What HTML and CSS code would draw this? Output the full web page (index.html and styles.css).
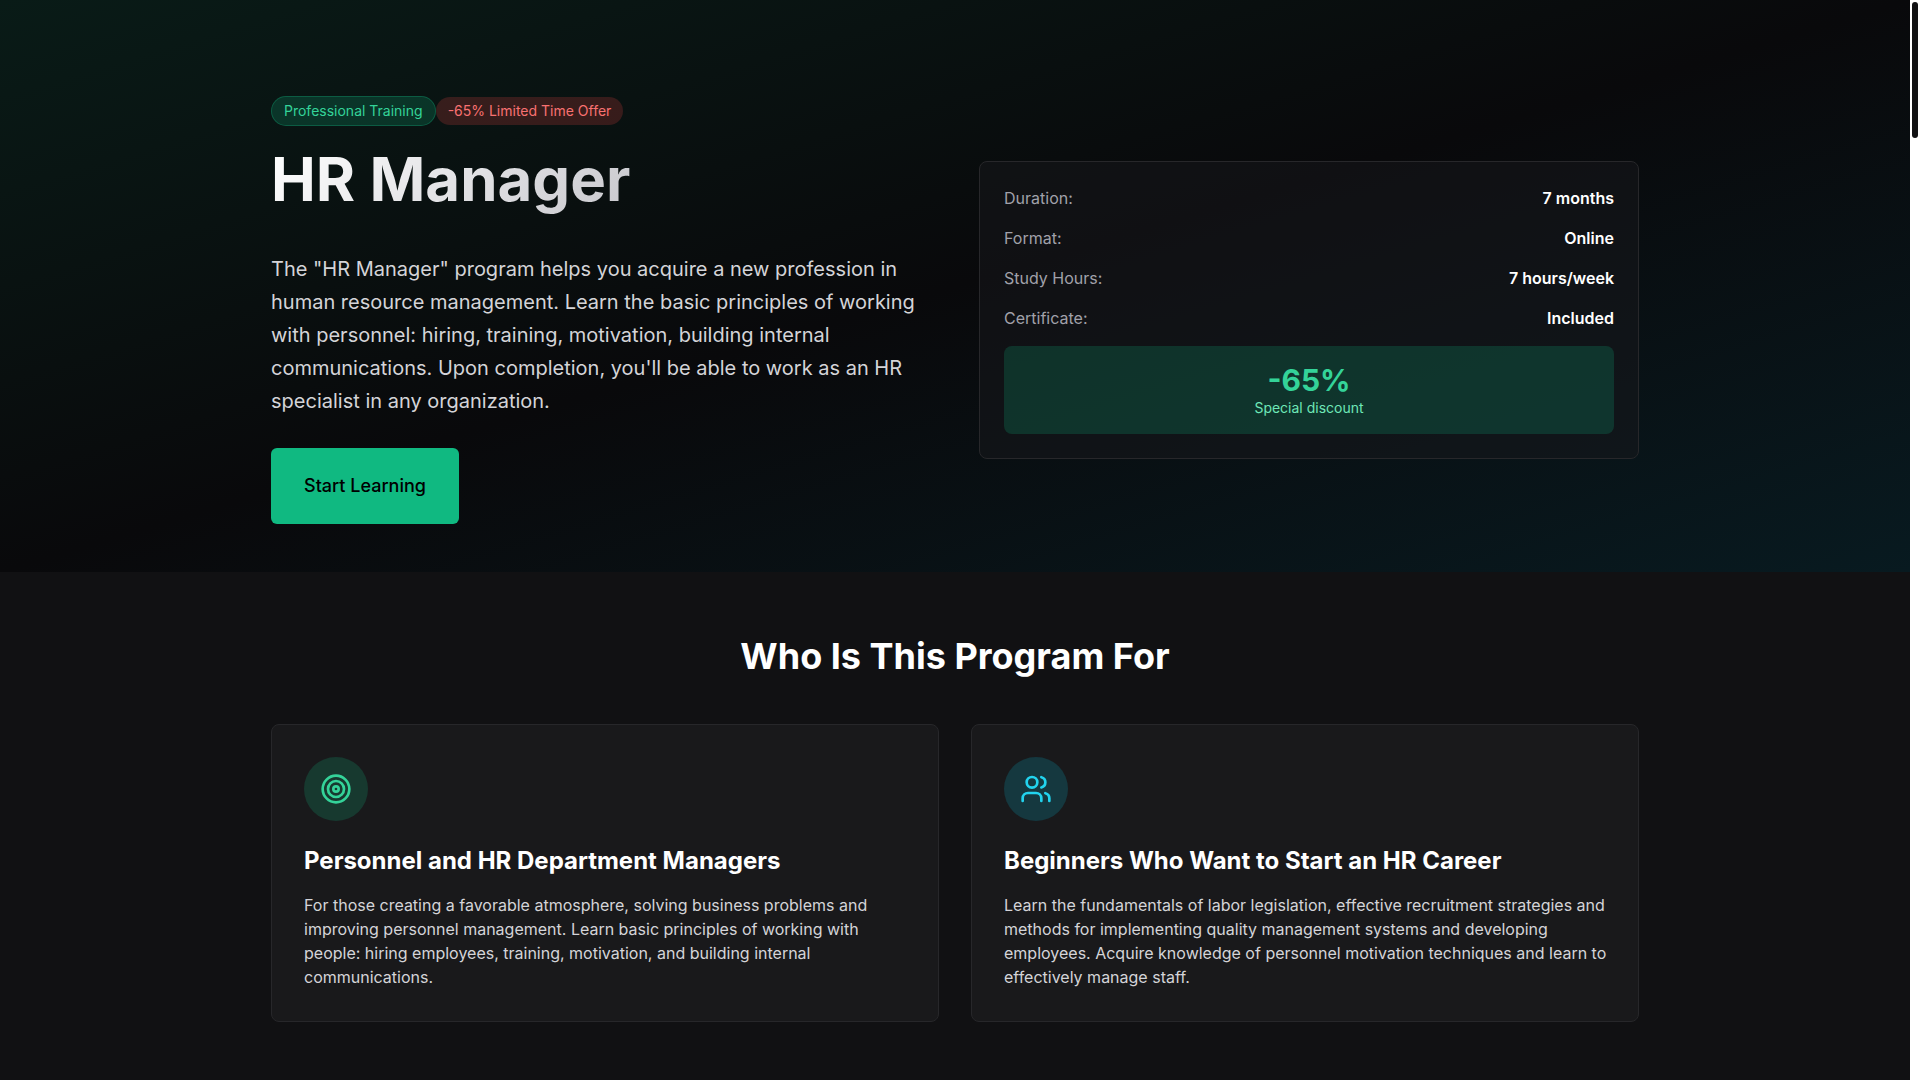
FILE: index.html
```html
<!DOCTYPE html>
<html lang="en">
<head>
  <meta charset="UTF-8">
  <meta name="viewport" content="width=device-width, initial-scale=1.0">
  <title>HR Manager</title>
  <link rel="stylesheet" href="styles.css">
</head>
<body>
  <main class="page">

    <!-- Hero -->
    <section class="hero">
      <div class="container hero-grid">
        <div class="hero-text">
          <div class="badges">
            <span class="badge badge-green">Professional Training</span>
            <span class="badge badge-red">-65% Limited Time Offer</span>
          </div>
          <h1>HR Manager</h1>
          <p class="lead">The "HR Manager" program helps you acquire a new profession in human resource management. Learn the basic principles of working with personnel: hiring, training, motivation, building internal communications. Upon completion, you'll be able to work as an HR specialist in any organization.</p>
          <button type="button" class="start-btn">Start Learning</button>
        </div>

        <div class="info-card">
          <dl class="info-list">
            <div class="info-row"><dt>Duration:</dt><dd>7 months</dd></div>
            <div class="info-row"><dt>Format:</dt><dd>Online</dd></div>
            <div class="info-row"><dt>Study Hours:</dt><dd>7 hours/week</dd></div>
            <div class="info-row"><dt>Certificate:</dt><dd>Included</dd></div>
          </dl>
          <div class="discount">
            <div class="discount-value">-65%</div>
            <div class="discount-label">Special discount</div>
          </div>
        </div>
      </div>
    </section>

    <!-- Audience -->
    <section class="audience">
      <div class="container">
        <h2>Who Is This Program For</h2>
        <div class="audience-grid">
          <article class="audience-card">
            <div class="icon icon-green">
              <svg viewBox="0 0 24 24" aria-hidden="true">
                <circle cx="12" cy="12" r="10"/>
                <circle cx="12" cy="12" r="6"/>
                <circle cx="12" cy="12" r="2"/>
              </svg>
            </div>
            <h3>Personnel and HR Department Managers</h3>
            <p>For those creating a favorable atmosphere, solving business problems and improving personnel management. Learn basic principles of working with people: hiring employees, training, motivation, and building internal communications.</p>
          </article>

          <article class="audience-card">
            <div class="icon icon-cyan">
              <svg viewBox="0 0 24 24" aria-hidden="true">
                <path d="M16 21v-2a4 4 0 0 0-4-4H6a4 4 0 0 0-4 4v2"/>
                <circle cx="9" cy="7" r="4"/>
                <path d="M22 21v-2a4 4 0 0 0-3-3.87"/>
                <path d="M16 3.13a4 4 0 0 1 0 7.75"/>
              </svg>
            </div>
            <h3>Beginners Who Want to Start an HR Career</h3>
            <p>Learn the fundamentals of labor legislation, effective recruitment strategies and methods for implementing quality management systems and developing employees. Acquire knowledge of personnel motivation techniques and learn to effectively manage staff.</p>
          </article>
        </div>
      </div>
    </section>

  </main>
  <div class="scrollbar"><div class="scrollbar-thumb"></div></div>
</body>
</html>
```

FILE: styles.css
```css
* {
  box-sizing: border-box;
  margin: 0;
  padding: 0;
}

body {
  background: #111113;
  color: #fafafa;
  font-family: Inter, sans-serif;
  font-size: 16px;
  line-height: 24px;
  padding-right: 10px;
}

.container {
  max-width: 1400px;
  margin: 0 auto;
  padding: 0 16px;
}

/* Hero */
.hero {
  background: linear-gradient(to bottom right, #091b17, #09090b 50%, #081a20);
  padding: 96px 0 48px;
}

.hero-grid {
  display: grid;
  grid-template-columns: 1fr 1fr;
  gap: 48px;
  align-items: center;
}

.badges {
  display: flex;
  align-items: center;
  margin-bottom: 16px;
}

.badge {
  font-size: 14px;
  line-height: 20px;
  padding: 4px 12px;
  border-radius: 20px;
}

.badge-green {
  background: rgba(16, 185, 129, 0.2);
  border: 1px solid rgba(16, 185, 129, 0.3);
  color: #34d399;
}

.badge-red {
  background: rgba(239, 68, 68, 0.2);
  color: #f87171;
}

h1 {
  font-size: 60px;
  line-height: 75px;
  font-weight: 700;
  margin-bottom: 36px;
  background: linear-gradient(135deg, #fff, #a1a1aa);
  -webkit-background-clip: text;
  background-clip: text;
  color: transparent;
}

.lead {
  font-size: 20px;
  line-height: 33px;
  color: #d4d4d8;
  margin-bottom: 30px;
}

.start-btn {
  display: block;
  min-width: 188px;
  background: #10b981;
  color: #000;
  border: none;
  border-radius: 6px;
  font-family: inherit;
  font-size: 18px;
  line-height: 28px;
  font-weight: 500;
  padding: 24px 32px;
  cursor: pointer;
}

.info-card {
  background: rgba(24, 24, 27, 0.5);
  border: 1px solid #27272a;
  border-radius: 8px;
  padding: 24px;
}

.info-list {
  display: grid;
  gap: 16px;
  margin-bottom: 16px;
}

.info-row {
  display: flex;
  justify-content: space-between;
}

.info-row dt {
  color: #a1a1aa;
}

.info-row dd {
  color: #fff;
  font-weight: 600;
}

.discount {
  background: rgba(16, 185, 129, 0.2);
  border-radius: 8px;
  padding: 16px;
  text-align: center;
}

.discount-value {
  color: #34d399;
  font-size: 30px;
  line-height: 36px;
  font-weight: 700;
}

.discount-label {
  color: #6ee7b7;
  font-size: 14px;
  line-height: 20px;
}

/* Audience */
.audience {
  padding: 64px 0;
}

h2 {
  color: #fff;
  font-size: 36px;
  line-height: 40px;
  font-weight: 700;
  text-align: center;
  margin-bottom: 48px;
}

.audience-grid {
  display: grid;
  grid-template-columns: 1fr 1fr;
  gap: 32px;
}

.audience-card {
  background: #19191b;
  border: 1px solid #27272a;
  border-radius: 8px;
  padding: 32px 28px 32px 32px;
}

.icon {
  width: 64px;
  height: 64px;
  border-radius: 50%;
  display: flex;
  align-items: center;
  justify-content: center;
  margin-bottom: 24px;
}

.icon svg {
  width: 32px;
  height: 32px;
  fill: none;
  stroke: currentColor;
  stroke-width: 2;
  stroke-linecap: round;
  stroke-linejoin: round;
}

.icon-green {
  background: rgba(16, 185, 129, 0.2);
  color: #34d399;
}

.icon-cyan {
  background: rgba(6, 182, 212, 0.2);
  color: #22d3ee;
}

h3 {
  color: #fff;
  font-size: 24px;
  line-height: 32px;
  font-weight: 700;
  margin-bottom: 16px;
}

.audience-card p {
  color: #d4d4d8;
}

/* Scrollbar */
.scrollbar {
  position: fixed;
  top: 0;
  right: 0;
  bottom: 0;
  width: 10px;
  padding: 2px;
  background: #fff;
}

.scrollbar-thumb {
  height: 136px;
  border-radius: 3px;
  background: #111113;
}
```
